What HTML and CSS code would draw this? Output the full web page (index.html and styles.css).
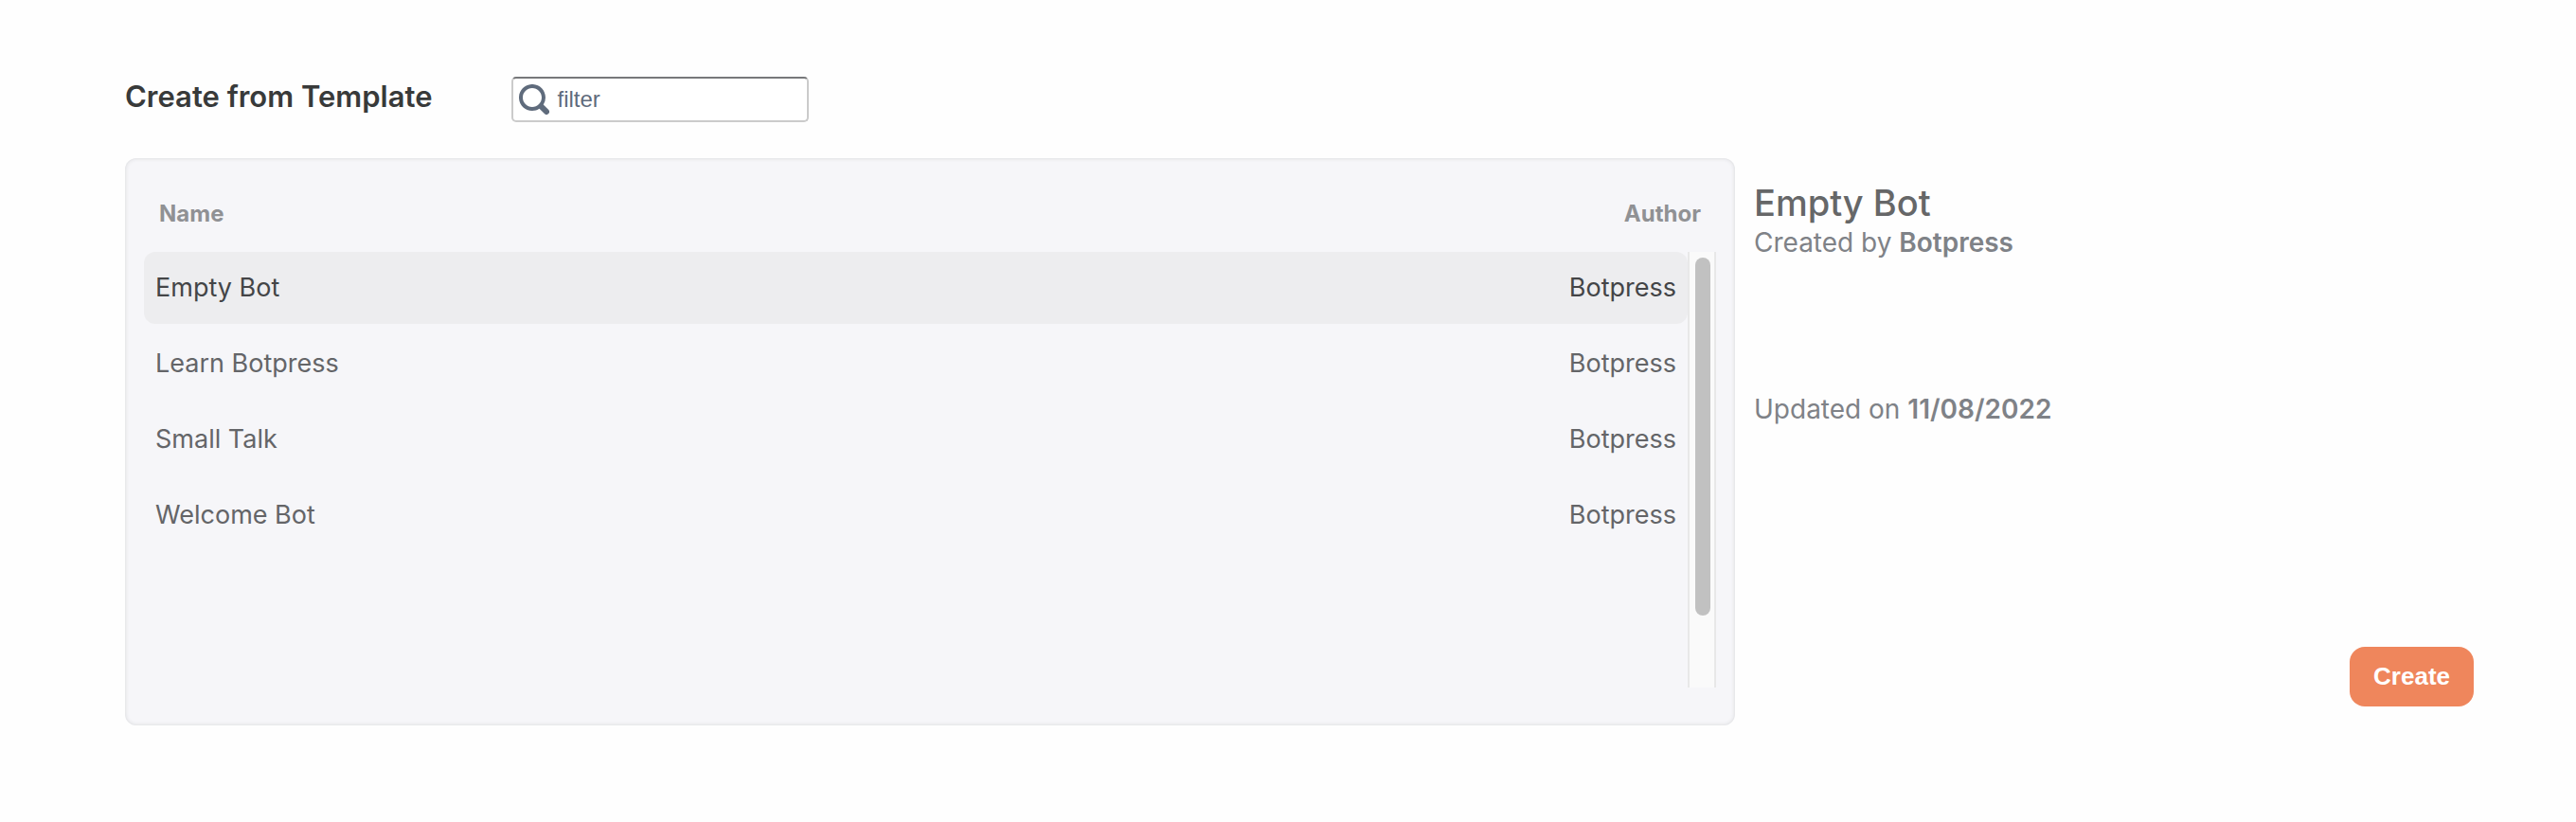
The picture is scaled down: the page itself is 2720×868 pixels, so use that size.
FILE: index.html
```html
<!DOCTYPE html>
<html lang="en">
<head>
<meta charset="utf-8">
<title>Create from Template</title>
<link rel="stylesheet" href="styles.css">
</head>
<body>
<main class="page">
  <header class="toolbar">
    <h1 class="toolbar-title">Create from Template</h1>
    <label class="filter">
      <svg class="filter-icon" viewBox="0 0 16 16" aria-hidden="true"><path fill="currentColor" d="M15.55 13.43l-2.67-2.68a6.94 6.94 0 001.11-3.76c0-3.87-3.13-7-7-7s-7 3.13-7 7 3.13 7 7 7c1.39 0 2.68-.42 3.76-1.11l2.68 2.67a1.498 1.498 0 102.12-2.12zm-8.56-1.44c-2.76 0-5-2.24-5-5s2.24-5 5-5 5 2.24 5 5-2.24 5-5 5z"/></svg>
      <input class="filter-input" type="text" placeholder="filter" aria-label="Filter templates">
    </label>
  </header>
  <div class="content">
    <section class="panel">
      <table class="templates">
        <thead class="templates-head">
          <tr class="head-row"><th scope="col">Name</th><th scope="col">Author</th></tr>
        </thead>
        <tbody class="templates-body">
          <tr class="row row-selected"><td>Empty Bot</td><td>Botpress</td></tr>
          <tr class="row"><td>Learn Botpress</td><td>Botpress</td></tr>
          <tr class="row"><td>Small Talk</td><td>Botpress</td></tr>
          <tr class="row"><td>Welcome Bot</td><td>Botpress</td></tr>
        </tbody>
      </table>
      <div class="scroll-track"><div class="scroll-thumb"></div></div>
    </section>
    <section class="details">
      <h2 class="details-title">Empty Bot</h2>
      <p class="details-line">Created by <strong>Botpress</strong></p>
      <p class="details-line details-updated">Updated on <strong>11/08/2022</strong></p>
      <button class="create" type="button">Create</button>
    </section>
  </div>
</main>
</body>
</html>
```
FILE: styles.css
```css
* { box-sizing: border-box; }

body {
  margin: 0;
  background: #fefefe;
  font-family: Inter, "Liberation Sans", sans-serif;
  font-size: 28px;
  line-height: 36px;
}

.page { padding: 80px 108px 100px 132px; }

.toolbar {
  display: flex;
  align-items: flex-start;
  gap: 84px;
  margin-bottom: 38px;
}

.toolbar-title {
  margin: 0;
  color: #383a3a;
  font-size: 31px;
  font-weight: 600;
  line-height: 44px;
}

.filter {
  display: flex;
  align-items: center;
  gap: 8px;
  width: 314px;
  height: 48px;
  margin-top: 1px;
  padding: 0 6px;
  border: 2px solid #cbcbcb;
  border-top-color: #77787a;
  border-radius: 5px;
  background: #fff;
  color: #5f6b7c;
}

.filter-icon { width: 32px; height: 32px; flex: none; }

.filter-input {
  flex: 1;
  min-width: 0;
  padding: 0;
  border: 0;
  outline: 0;
  background: transparent;
  color: inherit;
  font: 24px/28px "Liberation Sans", Arial, sans-serif;
}

.filter-input::placeholder { color: #5f6b7c; opacity: 1; }

.content {
  display: grid;
  grid-template-columns: 1700fr 760fr;
  gap: 20px;
}

.panel {
  display: grid;
  grid-template-columns: 1fr 30px;
  grid-template-rows: auto 460px;
  padding: 40px 20px;
  border-radius: 12px;
  background: #f6f6f9;
  box-shadow: inset 0 0 4px #d5d6d8;
}

.templates { display: contents; }

.templates-head { display: block; grid-column: 1 / -1; }

.head-row {
  display: flex;
  justify-content: space-between;
  padding: 1px 16px 22px;
  color: #909194;
  font-size: 24px;
}

.head-row th { padding: 0; font-weight: 700; }

.templates-body {
  display: flex;
  flex-direction: column;
  gap: 4px;
}

.row {
  display: flex;
  justify-content: space-between;
  padding: 20px 12px;
  border-radius: 12px;
  color: #646568;
  font-size: 27px;
}

.row td { padding: 0; }

.row-selected { background: #ededef; color: #444547; }

.scroll-track {
  padding: 6px;
  border: solid #e8e8e8;
  border-width: 0 2px;
  background: #fafafa;
}

.scroll-thumb {
  width: 16px;
  height: 378px;
  border-radius: 8px;
  background: #c1c1c1;
}

.details {
  display: flex;
  flex-direction: column;
  padding: 23px 0 20px;
  color: #7f8287;
}

.details-title {
  margin: 0;
  color: #666768;
  font-size: 38px;
  font-weight: 500;
  line-height: 48px;
}

.details-line { margin: 0; }

.details-line strong { font-weight: 600; }

.details-updated { margin-top: 140px; }

.create {
  align-self: flex-end;
  margin-top: auto;
  padding: 13px 25px 14px;
  border: 0;
  border-radius: 16px;
  background: #ef865c;
  color: #fff;
  font: bold 26px/36px "Liberation Sans", Arial, sans-serif;
}
```
